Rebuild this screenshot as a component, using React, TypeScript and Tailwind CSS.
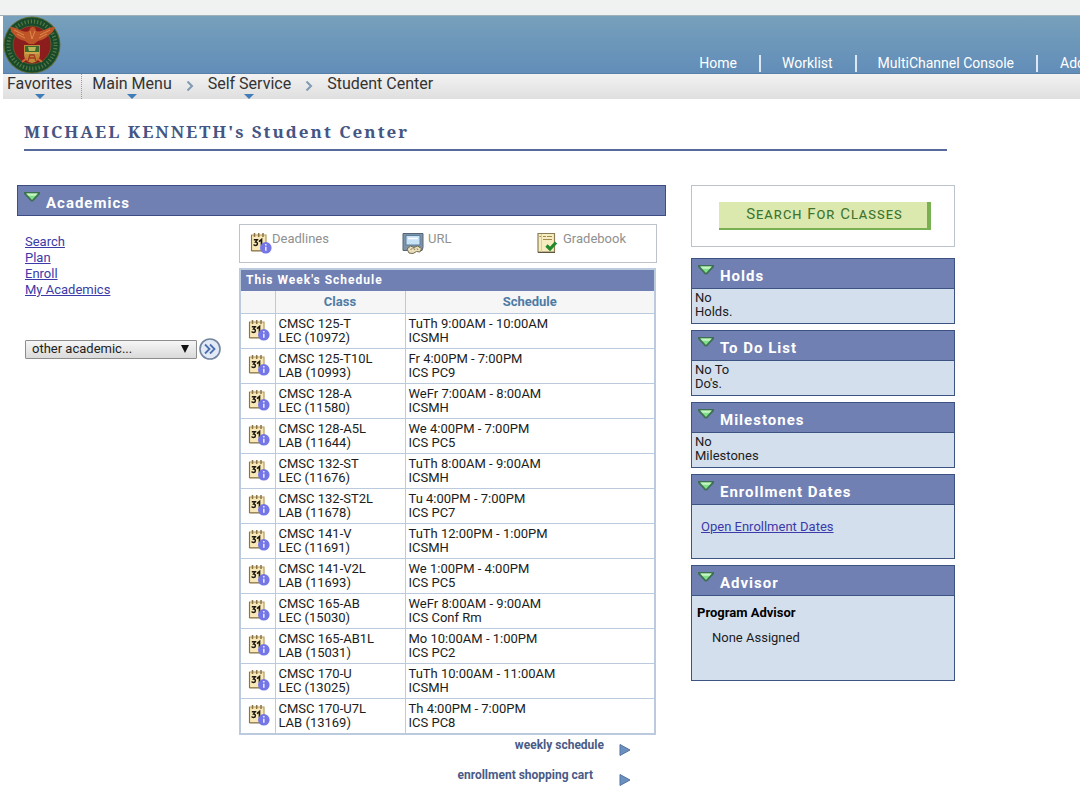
import { useState, type ReactNode } from "react";

const topLinks = ["Home", "Worklist", "MultiChannel Console"];

const crumbs = [
  { label: "Main Menu", menu: true },
  { label: "Self Service", menu: true },
  { label: "Student Center", menu: false },
];

const academicLinks = ["Search", "Plan", "Enroll", "My Academics"];

const classes = [
  ["CMSC 125-T", "LEC (10972)", "TuTh 9:00AM - 10:00AM", "ICSMH"],
  ["CMSC 125-T10L", "LAB (10993)", "Fr 4:00PM - 7:00PM", "ICS PC9"],
  ["CMSC 128-A", "LEC (11580)", "WeFr 7:00AM - 8:00AM", "ICSMH"],
  ["CMSC 128-A5L", "LAB (11644)", "We 4:00PM - 7:00PM", "ICS PC5"],
  ["CMSC 132-ST", "LEC (11676)", "TuTh 8:00AM - 9:00AM", "ICSMH"],
  ["CMSC 132-ST2L", "LAB (11678)", "Tu 4:00PM - 7:00PM", "ICS PC7"],
  ["CMSC 141-V", "LEC (11691)", "TuTh 12:00PM - 1:00PM", "ICSMH"],
  ["CMSC 141-V2L", "LAB (11693)", "We 1:00PM - 4:00PM", "ICS PC5"],
  ["CMSC 165-AB", "LEC (15030)", "WeFr 8:00AM - 9:00AM", "ICS Conf Rm"],
  ["CMSC 165-AB1L", "LAB (15031)", "Mo 10:00AM - 1:00PM", "ICS PC2"],
  ["CMSC 170-U", "LEC (13025)", "TuTh 10:00AM - 11:00AM", "ICSMH"],
  ["CMSC 170-U7L", "LAB (13169)", "Th 4:00PM - 7:00PM", "ICS PC8"],
];

function Seal() {
  return (
    <svg viewBox="0 0 58 58" className="size-[58px] shrink-0" aria-hidden="true">
      <circle cx="29" cy="29" r="28.5" fill="#5f6b35" />
      <circle cx="29" cy="29" r="27.5" fill="#17492b" />
      <circle cx="29" cy="29" r="23.5" fill="none" stroke="#7f9650" strokeWidth="4" strokeDasharray="1.2 2" opacity="0.6" />
      <circle cx="29" cy="29" r="19" fill="#8c1d1c" stroke="#5d5a2c" strokeWidth="1" />
      <path d="M7 11c5 0 8 2 12 4 3 1 5 1 7 0 1-2 1-4 4-4 2 0 3 2 3 4 3 1 5 0 8-1 4-2 7-3 11-3-1 4-3 6-6 8-3 3-6 5-11 6l-4 3h-5l-4-3c-5-1-8-3-10-5-3-3-4-5-5-9z" fill="#bd5529" />
      <path d="M11 14l10 5M14 18l8 4M47 14l-10 5M44 18l-8 4M27 15l2 8 3-8" stroke="#e08a48" strokeWidth="1" fill="none" />
      <path d="M21 29h16v9c0 5-3 8-8 9-5-1-8-4-8-9z" fill="#c0893a" />
      <path d="M22 30h14v6H22z" fill="#3c6b2f" />
      <path d="M25 31h8l-1 4h-6z" fill="#b9b457" />
      <path d="M22 37h14" stroke="#d8c060" strokeWidth="1" />
      <path d="M25 45l2-6h4l2 6M26 42h6" fill="none" stroke="#a03a20" strokeWidth="1.300" />
      <path d="M19 46l5-4M39 46l-5-4" stroke="#cf6a33" strokeWidth="2" />
    </svg>
  );
}

function CalendarIcon() {
  return (
    <svg viewBox="0 0 22 22" className="size-[22px] shrink-0" aria-hidden="true">
      <path d="M1.500 3h14.500v15.500H1.500z" fill="#f8e8b8" stroke="#b59c62" strokeWidth="1.200" />
      <path d="M1.500 3v16h14" fill="none" stroke="#85754c" strokeWidth="1" />
      <path d="M4.500 1v4M8.700 1v4M13 1v4" stroke="#8a7345" strokeWidth="1.500" />
      <path d="M3.800 7.800h3.400L5.600 10c2.400 0 2.400 3.400-.1 3.400-1 0-1.600-.3-1.900-.9" fill="none" stroke="#1f1b14" strokeWidth="1.500" />
      <path d="M9 9.600l2.500-2v6.200" fill="none" stroke="#1f1b14" strokeWidth="1.700" />
      <circle cx="15.800" cy="15.800" r="5.800" fill="#7475e6" />
      <path d="M15.800 14.800v4M15.800 12v1.600" stroke="#e4e6ff" strokeWidth="1.600" />
    </svg>
  );
}

function UrlIcon() {
  return (
    <svg viewBox="0 0 22 22" className="size-[22px] shrink-0" aria-hidden="true">
      <path d="M1 1.500h20v14l-1 3H1z" fill="#7f93a6" stroke="#566575" />
      <rect x="4" y="3.500" width="14" height="9.500" fill="#c7e2f7" stroke="#5d7f9c" />
      <path d="M6 6.500h10" stroke="#fff" strokeWidth="1.500" />
      <path d="M5 17l3.500-3 3.500 1.500 3.500-1.500 4 2.500-1.500 3.500-3.500-.5-3.500 2-4-.5z" fill="#eadfbd" stroke="#75694c" />
      <path d="M8.500 18l2-2M13 18l-1.500-2M16 18l-1-1.500" stroke="#8f8158" fill="none" />
    </svg>
  );
}

function GradebookIcon() {
  return (
    <svg viewBox="0 0 22 22" className="size-[22px] shrink-0" aria-hidden="true">
      <path d="M1 1.500h16.500v18.500H1z" fill="#f5ecc0" stroke="#8c7f58" strokeWidth="1.200" />
      <path d="M1 20.500h17" stroke="#5f5640" />
      <path d="M4.500 2v18" stroke="#dccb92" />
      <path d="M2.500 4.500h1.500M6 4.500h3M10 4.500h5M6 7.500h9" stroke="#a28a50" strokeWidth="1.200" />
      <path d="M9.500 13.500l3.500 3.500 6-6.500" fill="none" stroke="#1f8a2c" strokeWidth="3.200" />
    </svg>
  );
}

function GreenArrow() {
  return (
    <svg viewBox="0 0 16 10" className="mb-2 h-[10px] w-4 shrink-0" aria-hidden="true">
      <path d="M0 0h16v2L9 9.500H7L0 2z" fill="#3f6f52" />
      <path d="M2 1.500h12L8 8z" fill="#7fe08a" />
      <path d="M2.500 1.500h11l-2 2.300h-7z" fill="#c8f5c4" />
    </svg>
  );
}

function MenuMarker() {
  return (
    <svg viewBox="0 0 10 5" className="h-[5px] w-[10px]" aria-hidden="true">
      <path d="M0 0h10L5 5z" fill="#3f7cb8" />
    </svg>
  );
}

function Chevron() {
  return (
    <svg viewBox="0 0 8 10" className="mt-[7px] h-[10px] w-2 shrink-0" aria-hidden="true">
      <path d="M1.500 .5l4.500 4.500-4.500 4.500" fill="none" stroke="#7f9ab3" strokeWidth="2" />
    </svg>
  );
}

function PlayArrow() {
  return (
    <svg viewBox="0 0 12 12" className="mt-[6px] size-3 shrink-0" aria-hidden="true">
      <path d="M1 .5l10 5.500-10 5.500z" fill="#6a90c0" stroke="#5573a2" />
    </svg>
  );
}

function PanelHeader({ title, open, onToggle }: { title: string; open: boolean; onToggle: () => void }) {
  return (
    <h2 className="bg-[#7180b3]">
      <button
        type="button"
        aria-expanded={open}
        onClick={onToggle}
        className="flex h-[29px] w-full items-center gap-[6px] pl-[6px] text-left text-white"
      >
        <GreenArrow />
        <span className="pt-1 text-[15px] leading-5 font-bold tracking-[1px]">{title}</span>
      </button>
    </h2>
  );
}

function SidePanel({ title, children }: { title: string; children: ReactNode }) {
  const [open, setOpen] = useState(true);
  return (
    <section className="border border-[#3d5482] bg-[#d4dfee]">
      <PanelHeader title={title} open={open} onToggle={() => setOpen(!open)} />
      {open && <div className="border-t border-[#3d5482]">{children}</div>}
    </section>
  );
}

export default function App() {
  const [open, setOpen] = useState(true);
  return (
    <div className="min-h-screen overflow-x-hidden bg-[#fefffe] font-['Roboto',sans-serif] text-[13px] leading-[14px] text-[#1c1c1c]">
      <div className="h-4 border-b border-[#9fb0b8] bg-[#f0f2f1]" />
      <header className="ml-[3px]">
        <div className="flex h-[58px] justify-between border-b border-[#5680a8] bg-linear-to-b from-[#77a0bb] to-[#628db8]">
          <Seal />
          <nav aria-label="Global" className="flex items-end pb-px text-[14px] leading-[17px] whitespace-nowrap text-white">
            {topLinks.map((label) => (
              <a key={label} href="#" className="border-r-2 border-[#dce9f3] pr-[22px] pl-[21px]">
                {label}
              </a>
            ))}
            <a href="#" className="w-[42px] overflow-hidden pl-[22px]">
              Add
            </a>
          </nav>
        </div>
        <nav aria-label="Breadcrumb" className="flex h-[25px] bg-linear-to-b from-[#f1f2f1] to-[#dfdfdf] text-[16px] leading-5 text-[#333]">
          <a href="#" className="flex flex-col items-center border-r border-dotted border-[#999] pr-[9px] pl-1">
            Favorites
            <MenuMarker />
          </a>
          <ol className="flex gap-[14px] pl-[10px]">
            {crumbs.map((crumb, i) => (
              <li key={crumb.label} className="flex gap-[14px]">
                {i > 0 && <Chevron />}
                <a href="#" className="flex flex-col items-center">
                  {crumb.label}
                  {crumb.menu && <MenuMarker />}
                </a>
              </li>
            ))}
          </ol>
        </nav>
      </header>

      <main className="pr-[125px] pl-[17px]">
        <h1 className="mr-2 ml-[7px] border-b-2 border-[#566a9b] pt-[19px] pb-[4px] font-['Noto_Serif','DejaVu_Serif',serif] text-[17px] leading-[27px] font-bold tracking-[2px] text-[#455685]">
          MICHAEL KENNETH's Student Center
        </h1>

        <div className="mt-[34px] grid grid-cols-[minmax(0,1fr)_264px] items-start gap-[25px]">
          <section>
            <div className="border border-[#3d4c85]">
              <PanelHeader title="Academics" open={open} onToggle={() => setOpen(!open)} />
            </div>
            {open && (
              <div className="grid grid-cols-[222px_minmax(0,1fr)] pt-2 pr-[9px]">
                <div className="pt-[10px] pl-2">
                  <ul className="leading-4 text-[#3b3aa8]">
                    {academicLinks.map((label) => (
                      <li key={label}>
                        <a href="#" className="underline">
                          {label}
                        </a>
                      </li>
                    ))}
                  </ul>
                  <div className="mt-10 flex items-center gap-[2px]">
                    <div className="relative w-[172px]">
                      <select
                        aria-label="Other academic"
                        className="block h-[19px] w-full appearance-none rounded-[1px] border border-[#8d8d8d] bg-linear-to-b from-[#f6f6f6] to-[#dadada] pb-[2px] pl-[6px] text-[13px] leading-[15px] text-[#222]"
                      >
                        <option>other academic...</option>
                      </select>
                      <svg viewBox="0 0 8 8" className="pointer-events-none absolute top-[5px] right-2 size-2" aria-hidden="true">
                        <path d="M0 0h8L4 8z" fill="#111" />
                      </svg>
                    </div>
                    <button type="button" aria-label="Go">
                      <svg viewBox="0 0 22 22" className="size-[22px]" aria-hidden="true">
                        <circle cx="11" cy="11" r="10" fill="#e2eaf6" stroke="#71839f" strokeWidth="1.600" />
                        <path d="M6 6.500l4.500 4.500L6 15.500M11 6.500l4.500 4.500-4.500 4.500" fill="none" stroke="#4c6fb0" strokeWidth="1.800" />
                      </svg>
                    </button>
                  </div>
                </div>

                <div>
                  <ul className="grid h-[39px] grid-cols-[152px_135px_1fr] border border-[#bcc3cb] pt-[7px] pl-[10px] text-[#909090]">
                    <li className="flex">
                      <CalendarIcon />
                      Deadlines
                    </li>
                    <li className="flex gap-1">
                      <UrlIcon />
                      URL
                    </li>
                    <li className="flex gap-1">
                      <GradebookIcon />
                      Gradebook
                    </li>
                  </ul>

                  <div className="mt-[5px] mr-px border-2 border-[#bccadd]">
                    <h3 className="h-[21px] bg-[#7180b3] pl-[5px] text-[12px] leading-5 font-bold tracking-[1px] text-white">
                      This Week's Schedule
                    </h3>
                    <table className="w-full table-fixed border-collapse">
                      <colgroup>
                        <col className="w-[34px]" />
                        <col className="w-[130px]" />
                        <col />
                      </colgroup>
                      <thead>
                        <tr className="h-[22px] bg-[#f5f6f5] text-[#4f7ba6]">
                          <th aria-label="Details" className="border-r border-b border-[#bccadd]" />
                          <th scope="col" className="border-r border-b border-[#bccadd]">Class</th>
                          <th scope="col" className="border-b border-[#bccadd]">Schedule</th>
                        </tr>
                      </thead>
                      <tbody>
                        {classes.map(([name, section, time, room]) => (
                          <tr key={name} className="h-[35px] border-b border-[#bccadd] align-top last:border-b-0">
                            <td className="border-r border-[#bccadd] pt-[5px] pl-[7px]">
                              <CalendarIcon />
                            </td>
                            <td className="border-r border-[#bccadd] pt-[3px] pl-[3px]">
                              {name}
                              <br />
                              {section}
                            </td>
                            <td className="pt-[3px] pl-[3px]">
                              {time}
                              <br />
                              {room}
                            </td>
                          </tr>
                        ))}
                      </tbody>
                    </table>
                  </div>

                  <div className="flex flex-col items-end gap-3 pt-[3px] pr-[26px] text-[12px] font-bold text-[#4a5a87]">
                    <a href="#" className="flex gap-[15px]">
                      weekly schedule
                      <PlayArrow />
                    </a>
                    <a href="#" className="flex gap-[26px]">
                      enrollment shopping cart
                      <PlayArrow />
                    </a>
                  </div>
                </div>
              </div>
            )}
          </section>

          <aside className="flex flex-col gap-[6px]">
            <div className="mb-[5px] flex h-[62px] items-center justify-center border border-[#bcc3cb] pl-[3px]">
              <button
                type="button"
                className="h-7 w-[212px] border-r-4 border-b-2 border-[#79b052] bg-[#dbe9ae] pb-[2px] pl-1 text-[15px] leading-5 tracking-[1px] text-[#3f7430] [font-variant-caps:small-caps]"
              >
                Search For Classes
              </button>
            </div>
            <SidePanel title="Holds">
              <p className="h-[34px] pt-[2px] pl-[3px]">
                No
                <br />
                Holds.
              </p>
            </SidePanel>
            <SidePanel title="To Do List">
              <p className="h-[34px] pt-[2px] pl-[3px]">
                No To
                <br />
                Do's.
              </p>
            </SidePanel>
            <SidePanel title="Milestones">
              <p className="h-[34px] pt-[2px] pl-[3px]">
                No
                <br />
                Milestones
              </p>
            </SidePanel>
            <SidePanel title="Enrollment Dates">
              <p className="h-[53px] pt-[15px] pl-[9px]">
                <a href="#" className="text-[#3b3aa8] underline">
                  Open Enrollment Dates
                </a>
              </p>
            </SidePanel>
            <SidePanel title="Advisor">
              <div className="h-[84px] pt-[10px] pl-[5px]">
                <h3 className="font-bold text-black">Program Advisor</h3>
                <p className="pt-[11px] pl-[15px]">None Assigned</p>
              </div>
            </SidePanel>
          </aside>
        </div>
      </main>
    </div>
  );
}
